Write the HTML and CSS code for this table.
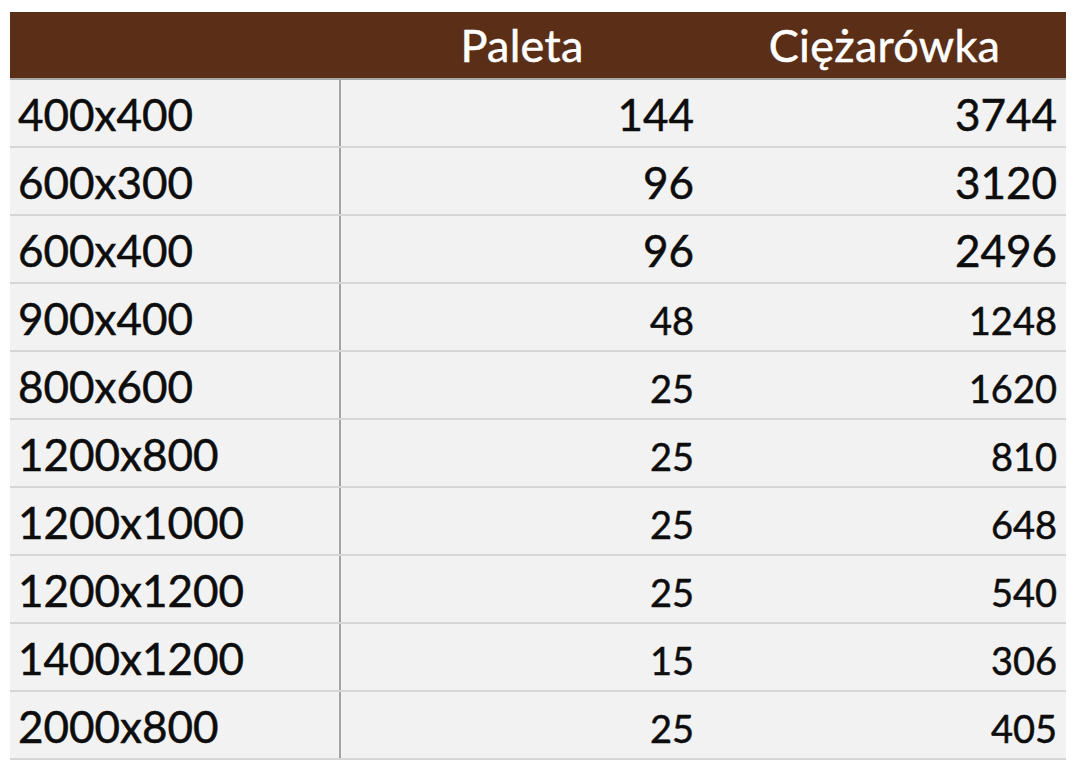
FILE: index.html
```html
<!DOCTYPE html>
<html lang="pl">
<head>
<meta charset="utf-8">
<title>Paleta / Ciężarówka</title>
<link rel="stylesheet" href="styles.css">
</head>
<body>
<div class="sheet">
  <div class="row head">
    <div class="cell name"></div>
    <div class="cell title">Paleta</div>
    <div class="cell title">Ciężarówka</div>
  </div>
  <div class="row">
    <div class="cell name">400x400</div>
    <div class="cell num">144</div>
    <div class="cell num">3744</div>
  </div>
  <div class="row">
    <div class="cell name">600x300</div>
    <div class="cell num">96</div>
    <div class="cell num">3120</div>
  </div>
  <div class="row">
    <div class="cell name">600x400</div>
    <div class="cell num">96</div>
    <div class="cell num">2496</div>
  </div>
  <div class="row">
    <div class="cell name">900x400</div>
    <div class="cell num small">48</div>
    <div class="cell num small">1248</div>
  </div>
  <div class="row">
    <div class="cell name">800x600</div>
    <div class="cell num small">25</div>
    <div class="cell num small">1620</div>
  </div>
  <div class="row">
    <div class="cell name">1200x800</div>
    <div class="cell num small">25</div>
    <div class="cell num small">810</div>
  </div>
  <div class="row">
    <div class="cell name">1200x1000</div>
    <div class="cell num small">25</div>
    <div class="cell num small">648</div>
  </div>
  <div class="row">
    <div class="cell name">1200x1200</div>
    <div class="cell num small">25</div>
    <div class="cell num small">540</div>
  </div>
  <div class="row">
    <div class="cell name">1400x1200</div>
    <div class="cell num small">15</div>
    <div class="cell num small">306</div>
  </div>
  <div class="row">
    <div class="cell name">2000x800</div>
    <div class="cell num small">25</div>
    <div class="cell num small">405</div>
  </div>
</div>
</body>
</html>
```

FILE: styles.css
```css
html, body {
  margin: 0;
  padding: 0;
  background: #ffffff;
}

body {
  font-family: Lato, "Open Sans", "Liberation Sans", sans-serif;
  color: #0d0d0d;
}

.sheet {
  width: 1056px;
  margin: 12px 0 0 10px;
}

.row {
  display: grid;
  grid-template-columns: 331px 362px 363px;
  height: 68px;
  box-sizing: border-box;
  background: #f2f2f2;
  border-bottom: 2px solid #d6d6d6;
}

.row.head {
  height: 68px;
  background: #5b2f17;
  border-bottom: 2px solid #a8a8a8;
}

.cell {
  font-size: 44px;
  line-height: 64px;
  padding-top: 2px;
  white-space: nowrap;
  -webkit-text-stroke: 0.5px currentColor;
}

.name {
  padding-left: 8px;
  border-right: 2px solid #a4a4a4;
}

.head .name {
  border-right: none;
}

.title {
  color: #ffffff;
  text-align: center;
  font-size: 45px;
  letter-spacing: 0.3px;
  line-height: 66px;
  padding-top: 0;
}

.num {
  text-align: right;
  padding-right: 9px;
}

.num.small {
  font-size: 38px;
  line-height: 59px;
  padding-top: 7px;
}
```
